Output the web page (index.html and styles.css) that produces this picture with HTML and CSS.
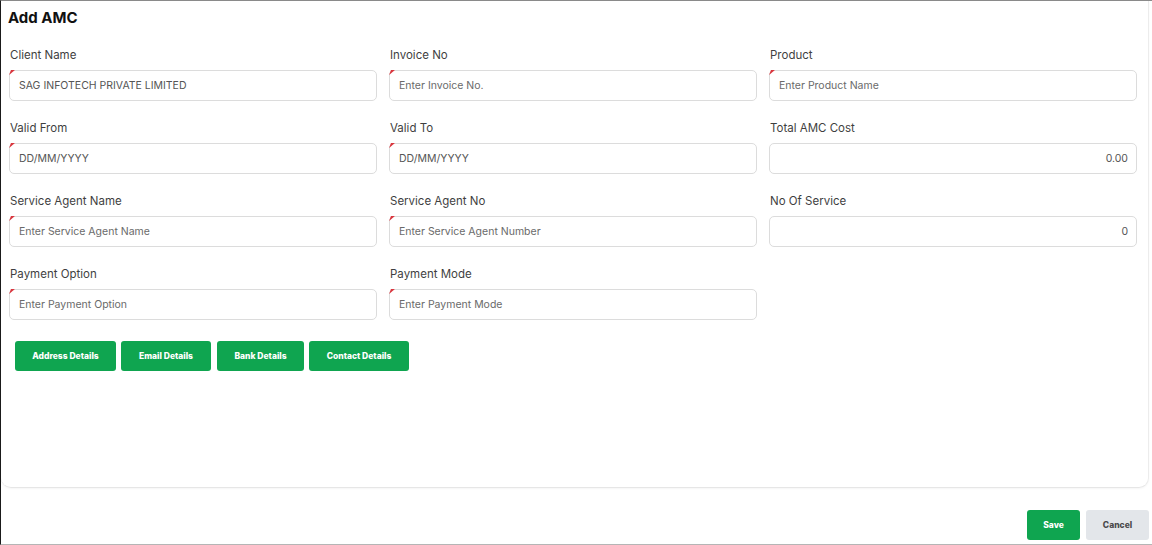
FILE: index.html
```html
<!DOCTYPE html>
<html>
<head>
<meta charset="utf-8">
<link rel="stylesheet" href="styles.css">
</head>
<body>
<div class="page">
  <div class="card">
    <h1 class="title">Add AMC</h1>
    <div class="grid">
      <div class="field">
        <label class="label">Client Name</label>
        <div class="input req"><span class="val">SAG INFOTECH PRIVATE LIMITED</span></div>
      </div>
      <div class="field">
        <label class="label">Invoice No</label>
        <div class="input req"><span class="ph">Enter Invoice No.</span></div>
      </div>
      <div class="field">
        <label class="label">Product</label>
        <div class="input req"><span class="ph">Enter Product Name</span></div>
      </div>

      <div class="field">
        <label class="label">Valid From</label>
        <div class="input req"><span class="val">DD/MM/YYYY</span></div>
      </div>
      <div class="field">
        <label class="label">Valid To</label>
        <div class="input req"><span class="val">DD/MM/YYYY</span></div>
      </div>
      <div class="field">
        <label class="label">Total AMC Cost</label>
        <div class="input right"><span class="val">0.00</span></div>
      </div>

      <div class="field">
        <label class="label">Service Agent Name</label>
        <div class="input req"><span class="ph">Enter Service Agent Name</span></div>
      </div>
      <div class="field">
        <label class="label">Service Agent No</label>
        <div class="input req"><span class="ph">Enter Service Agent Number</span></div>
      </div>
      <div class="field">
        <label class="label">No Of Service</label>
        <div class="input right"><span class="val">0</span></div>
      </div>

      <div class="field">
        <label class="label">Payment Option</label>
        <div class="input req"><span class="ph">Enter Payment Option</span></div>
      </div>
      <div class="field">
        <label class="label">Payment Mode</label>
        <div class="input req"><span class="ph">Enter Payment Mode</span></div>
      </div>
    </div>
    <div class="actions">
      <button class="btn green w-addr">Address Details</button>
      <button class="btn green w-email">Email Details</button>
      <button class="btn green w-bank">Bank Details</button>
      <button class="btn green w-contact">Contact Details</button>
    </div>
  </div>
  <div class="footer">
    <button class="btn green save">Save</button>
    <button class="btn gray cancel">Cancel</button>
  </div>
</div>
</body>
</html>
```
FILE: styles.css
```css
* { box-sizing: border-box; }
html, body { margin: 0; padding: 0; background: #fff; }
body { font-family: Inter, "Noto Sans", sans-serif; color: #222; }

.page {
  width: 1152px;
  height: 545px;
  border-left: 1px solid #1a1a1a;
  border-top: 1px solid #8a8a8a;
  border-bottom: 1px solid #b5b5b5;
  display: flex;
  flex-direction: column;
  overflow: hidden;
}

.card {
  width: 1148px;
  height: 487px;
  border-right: 1px solid #ececec;
  border-bottom: 1px solid #e6e6e6;
  border-radius: 0 0 10px 10px;
  padding: 7px 0 0 8px;
  box-shadow: 0 1px 2px rgba(0,0,0,0.04);
}

.title {
  margin: 0 0 20px -1px;
  font-size: 15px;
  line-height: 20px;
  font-weight: 700;
  color: #111;
}

.grid {
  display: grid;
  grid-template-columns: 368px 368px 368px;
  column-gap: 12px;
  row-gap: 20px;
}

.field { display: flex; flex-direction: column; }

.label {
  font-size: 11.5px;
  line-height: 15px;
  color: #3f3f3f;
  margin: 0 0 7px 1px;
}

.input {
  position: relative;
  height: 31px;
  border: 1px solid #dcdcdc;
  border-radius: 5px;
  display: flex;
  align-items: center;
  padding: 0 9px;
  font-size: 10.5px;
  background: #fff;
}
.input.right { justify-content: flex-end; padding-right: 8px; }
.input.req::before {
  content: "";
  position: absolute;
  top: -1px;
  left: 0;
  width: 0;
  height: 0;
  border-top: 5px solid #d9363e;
  border-right: 4px solid transparent;
  transform: skewX(-20deg);
}
.val { color: #555; }
.ph { color: #6a6a6a; }

.actions {
  display: flex;
  gap: 5px;
  margin: 21px 0 0 6px;
}

.btn {
  font-family: Inter, "Noto Sans", sans-serif;
  border: none;
  border-radius: 3px;
  height: 30px;
  font-size: 8.5px;
  font-weight: 800;
  padding: 0;
  cursor: pointer;
}
.green { background: #0fa550; color: #fff; }
.gray { background: #e3e6ea; color: #4a4a4a; }

.w-addr { width: 101px; }
.w-email { width: 90px; }
.w-bank { width: 87px; margin-left: 1px; }
.w-contact { width: 100px; }

.footer {
  display: flex;
  justify-content: flex-end;
  gap: 6px;
  padding: 22px 3px 0 0;
}
.save { width: 53px; }
.cancel { width: 63px; }
```
